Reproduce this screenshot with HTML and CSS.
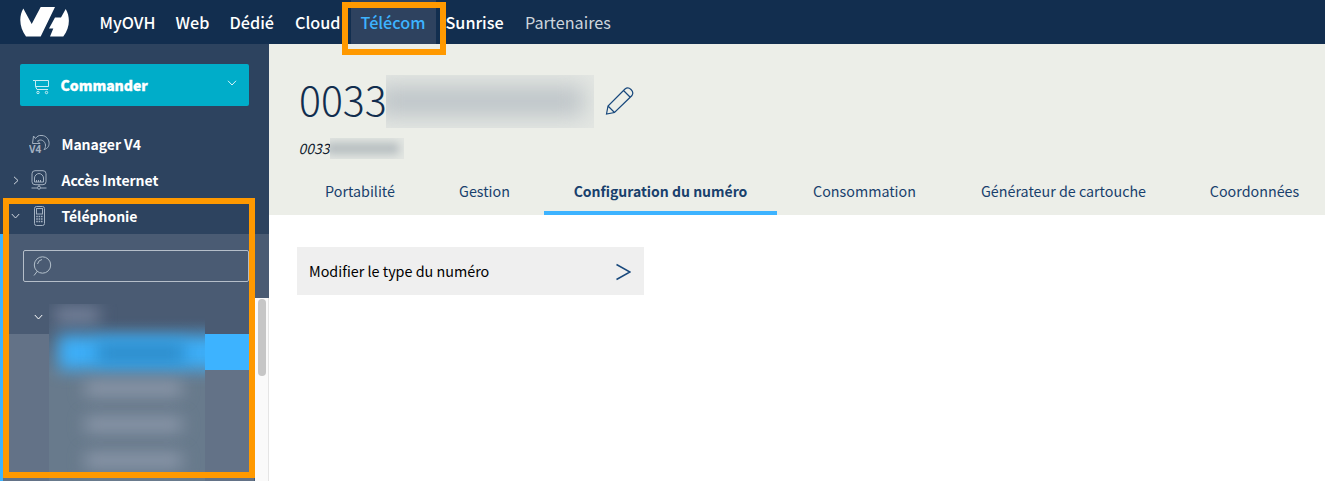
FILE: index.html
```html
<!DOCTYPE html>
<html lang="fr">
<head>
<meta charset="utf-8">
<title>OVH Télécom</title>
<link rel="stylesheet" href="styles.css">
</head>
<body>
<header class="topbar">
  <svg class="logo" width="50" height="30" viewBox="0 0 50 30"><path fill="#fff" d="M3.300 1.500L11.700 17L20.700 0H35L20.700 29.500H6C-.5 21-1.500 10 3.300 1.500ZM45.700 2C50.500 10 50 21 43.300 29.500H30L33.300 21.500H29L35 10.500H41Z"/></svg>
  <nav class="topnav">
    <a>MyOVH</a><a>Web</a><a>Dédié</a><a>Cloud</a><a class="current">Télécom</a><a>Sunrise</a><a class="light">Partenaires</a>
  </nav>
</header>
<div class="page">
  <aside class="sidebar">
    <button class="order">
      <svg class="cart" width="18" height="16" viewBox="0 0 18 16" fill="none" stroke="#c8eef4" stroke-width="1"><path d="M0 1.500H2.500V7.500H15.500V1.500H2.500M2.500 7.500L4 10.500H15"/><circle cx="5" cy="13.500" r="1.200"/><circle cx="13.500" cy="13.500" r="1.200"/></svg>
      <span>Commander</span>
      <svg class="caret" width="10" height="6" viewBox="0 0 10 6" fill="none" stroke="#d8f5fa"><path d="M1 .8L5 5L9 .8"/></svg>
    </button>
    <ul class="menu">
      <li><i></i>
        <svg width="22" height="20" viewBox="0 0 22 20" fill="none" stroke="#a3b1c1"><path d="M4.500 2L3.500 9.500H11L8.500 7C12 4.500 16 7 16.500 11C16.500 13.500 16 14.500 15 15.500C23 14 21 2 13 1.500C9.500 1 8 2.500 6.500 4.500Z"/><text class="v4" x="0" y="18.500">V4</text></svg>
        <span>Manager V4</span></li>
      <li><i class="closed"><svg width="6" height="9" viewBox="0 0 6 9" fill="none" stroke="#d0d7df"><path d="M1 .8L5 4.500L1 8.200"/></svg></i>
        <svg width="22" height="20" viewBox="0 0 22 20" fill="none" stroke="#a3b1c1"><rect x="3" y=".7" width="14" height="14" rx="3"/><path d="M5.500 12V8C5.500 5.500 8 3.500 10 3.500S14.500 5.500 14.500 8V12ZM7.500 12V10M9.500 12V10M11.500 12V10M10 15V16M2.500 18H8.500M11.500 18H17.500"/><circle cx="10" cy="17.700" r="1.500"/></svg>
        <span>Accès Internet</span></li>
      <li><i><svg width="9" height="6" viewBox="0 0 9 6" fill="none" stroke="#d0d7df"><path d="M.8 1L4.500 5L8.200 1"/></svg></i>
        <svg width="22" height="20" viewBox="0 0 22 20" fill="none" stroke="#a3b1c1"><rect x="5.500" y=".5" width="10" height="19" rx="2"/><rect x="7.500" y="2.500" width="6" height="5.500"/><path d="M7.200 10.500H14M7.200 13H14M7.200 15.500H14" stroke-width="1.400" stroke-dasharray="1.600 .8"/></svg>
        <span>Téléphonie</span></li>
    </ul>
    <section class="branch">
      <div class="search"><svg width="22" height="22" viewBox="0 0 22 22" fill="none" stroke="#b4c1cc"><circle cx="10.500" cy="10" r="8.200"/><path d="M5.500 16L2 20.500M5.500 9Q6.500 5 10 4.500"/></svg></div>
      <div class="group"><svg width="9" height="6" viewBox="0 0 9 6" fill="none" stroke="#fff"><path d="M.8 1L4.500 5L8.200 1"/></svg></div>
      <div class="lines"><div class="selected"></div></div>
      <div class="masked-lines"><b class="name"></b><b class="pick"></b><b class="pick-text"></b><b class="row r1"></b><b class="row r2"></b><b class="row r3"></b></div>
      <div class="scroll"><div class="thumb"></div></div>
    </section>
  </aside>
  <main class="main">
    <section class="heading">
      <h1><span class="number">0033</span><span class="mask big"><b></b></span>
        <svg width="30" height="30" viewBox="0 0 30 30" fill="none" stroke="#18487c" stroke-width="1.200"><path d="M1.500 28L3 20L20 3Q23 .5 26 3.500Q29 6.500 27 9.500L9.500 26.500ZM3 20L9.500 26.500M18.500 4.500L25.500 11.500"/></svg></h1>
      <p class="sub"><span>0033</span><span class="mask small"><b></b></span></p>
      <nav class="tabs"><a>Portabilité</a><a>Gestion</a><a class="active">Configuration du numéro</a><a>Consommation</a><a>Générateur de cartouche</a><a>Coordonnées</a></nav>
    </section>
    <a class="action"><span>Modifier le type du numéro</span><svg width="16" height="18" viewBox="0 0 16 18" fill="none" stroke="#18487c" stroke-width="1.500"><path d="M1.500 1.500L15 9L1.500 16.500"/></svg></a>
  </main>
</div>
<div class="callout callout-top"></div>
<div class="callout callout-side"></div>
</body>
</html>
```
FILE: styles.css
```css
* { box-sizing: border-box; }
body { margin: 0; width: 1325px; height: 481px; overflow: hidden; position: relative; background: #fff; font-family: "Noto Sans CJK SC", "Noto Sans", sans-serif; font-size: 14px; }
.topbar { height: 44px; background: #122e4f; display: flex; padding-left: 20px; }
.logo { margin-top: 7px; }
.topnav { display: grid; grid-template-columns: 76px 54px 65.500px 65.500px 85px 79.500px 110px; margin-left: 19.500px; line-height: 45px; color: #fff; font-weight: 500; font-size: 16.200px; }
.topnav a { padding-left: 10px; white-space: nowrap; }
.topnav .current { background: #2e425f; color: #3db3ff; }
.topnav .light { color: #cdd5dd; font-weight: 400; }
.page { display: flex; height: 437px; }
.sidebar { width: 269px; background: #2d435f; flex: none; }
.order { display: flex; align-items: center; width: 229px; height: 42px; margin: 20px 0 0 20px; padding: 0 12px 0 13px; border: 0; border-radius: 2px; background: #00adc9; color: #fff; font-family: inherit; font-weight: 900; font-size: 14px; -webkit-text-stroke: .3px #fff; letter-spacing: -.05px; }
.cart { margin-top: 3px; }
.order span { margin-left: 9.500px; }
.caret { margin: 0 0 5px auto; }
.menu { list-style: none; margin: 20px 0 0; padding: 0; color: #fff; font-weight: 700; }
.menu li { display: flex; align-items: center; height: 36px; padding-left: 11px; }
.menu i { width: 18px; display: flex; }
.menu .closed { padding-left: 2px; padding-top: 1px; }
.menu span { margin-left: 10.500px; letter-spacing: -.05px; }
.v4 { font: 700 10px "Open Sans", sans-serif; fill: #a3b1c1; stroke: none; }
.branch { position: relative; height: 247px; background: #4a5b73; border-left: 3px solid #3db3ff; padding-top: 16px; }
.search { margin-left: 20px; width: 226px; height: 32px; border: 1px solid #b5bec9; border-radius: 2px; padding: 4px 0 0 8px; }
.group { height: 52px; padding: 32px 0 0 31px; }
.group svg { display: block; }
.lines { height: 147px; width: 251px; background: #637287; }
.selected { height: 36px; margin-left: 180px; background: #3db3ff; }
.masked-lines { position: absolute; left: 46px; top: 70px; width: 156px; height: 177px; overflow: hidden; background: linear-gradient(#4a5b73 15px, #687a8c 70px); }
.masked-lines b { position: absolute; filter: blur(8px); }
.name { left: 6px; top: 3px; width: 44px; height: 17px; background: #75819a; }
.pick { left: 9px; top: 31px; width: 172px; height: 35px; background: #3daef7; }
.pick-text { left: 48px; top: 38px; width: 88px; height: 22px; background: #2e8dcb; }
.row { left: 36px; width: 97px; height: 15px; background: #8c98aa; }
.r1 { top: 77px; } .r2 { top: 113px; } .r3 { top: 149px; }
.scroll { position: absolute; right: 0; top: 64px; width: 14px; height: 183px; background: #fafafa; border-right: 1px solid #e5e5e5; padding: 1px 0 0 3px; }
.thumb { width: 8px; height: 77px; border-radius: 4px; background: #c6c6c6; }
.main { flex: 1; min-width: 0; }
.heading { height: 171px; background: #eceee8; padding-top: 31px; }
h1 { display: flex; align-items: center; height: 53px; margin: 0; padding-left: 30px; font-weight: 300; font-size: 41px; color: #112d4e; line-height: 53px; }
.number { width: 87px; margin-top: -7px; }
h1 svg { margin: 0 0 1px 11px; }
.mask { position: relative; overflow: hidden; background: #e4e7e3; }
.mask b { position: absolute; background: #bdc4c8; }
.big { width: 208px; height: 53px; }
.big b { inset: 11px 10px 12px -8px; filter: blur(11px); }
.sub { display: flex; align-items: center; height: 21px; margin: 10px 0 0; padding-left: 29.500px; font-style: italic; font-size: 14px; line-height: 21px; color: #111c2e; }
.sub span:first-child { width: 31.500px; }
.small { width: 74px; height: 21px; }
.small b { inset: 5px 5px 5px -4px; background: #b2babd; filter: blur(5px); }
.tabs { display: grid; grid-template-columns: 130px 111px 233px 167px 223px 151px; grid-template-rows: 46px; column-gap: 4px; margin: 10px 0 0 26px; height: 46px; font-size: 14.300px; line-height: 43px; text-align: center; color: #18406c; white-space: nowrap; }
.tabs .active { font-size: 14px; line-height: 45px; font-weight: 700; border-bottom: 4px solid #3db3ff; }
.action { display: flex; align-items: center; justify-content: space-between; width: 347px; height: 48px; margin: 32px 0 0 28px; padding: 0 13px 0 12px; background: #efefef; color: #000; font-size: 14.350px; }
.action span { margin-top: -2px; }
.action svg { margin-top: 2px; }
.callout { position: absolute; border: 6px solid #ff9900; }
.callout-top { left: 342px; top: 2px; width: 104px; height: 53px; }
.callout-side { left: 3px; top: 198px; width: 252px; height: 280px; }
```
